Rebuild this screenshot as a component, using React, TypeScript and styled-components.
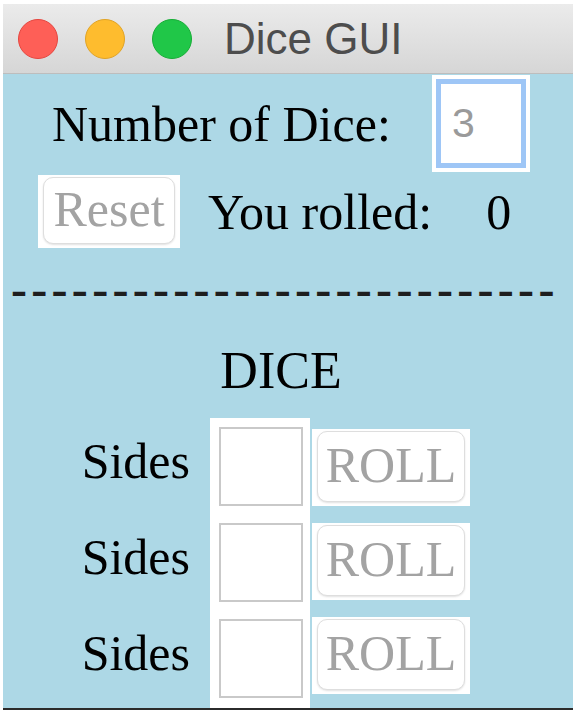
import styled, { createGlobalStyle } from "styled-components";

const GlobalStyle = createGlobalStyle`
  html, body {
    margin: 0;
    padding: 0;
    background: #ffffff;
  }
`;

const Window = styled.div`
  width: 570px;
  height: 704px;
  margin: 4px 0 0 3px;
  display: flex;
  flex-direction: column;
  border-bottom: 2px solid #2b2b2b;
  overflow: hidden;
`;

const TitleBar = styled.div`
  height: 69px;
  flex: none;
  display: flex;
  align-items: center;
  gap: 27px;
  padding-left: 15px;
  background: linear-gradient(#ebebeb, #d6d6d6);
  border-bottom: 1px solid #bdbdbd;
`;

const Light = styled.span<{ $fill: string; $edge: string }>`
  width: 40px;
  height: 40px;
  border-radius: 50%;
  box-sizing: border-box;
  background: ${({ $fill }) => $fill};
  border: 1px solid ${({ $edge }) => $edge};
`;

const Title = styled.span`
  margin-left: 5px;
  font-family: "Liberation Sans", Arial, sans-serif;
  font-size: 44px;
  color: #4d4d4d;
`;

const Content = styled.div`
  flex: 1;
  display: flex;
  flex-direction: column;
  background: #add8e6;
  font-family: "Liberation Serif", "Times New Roman", serif;
  font-size: 50px;
  color: #000;
`;

const Row = styled.div<{ $height: number; $top?: number }>`
  height: ${({ $height }) => $height}px;
  margin-top: ${({ $top }) => $top ?? 0}px;
  display: flex;
  align-items: center;
`;

const Label = styled.span<{ $left?: number; $top?: number }>`
  margin-left: ${({ $left }) => $left ?? 0}px;
  margin-top: ${({ $top }) => $top ?? 0}px;
  line-height: 50px;
  white-space: nowrap;
`;

const NumberBox = styled.div`
  width: 98px;
  height: 97px;
  box-sizing: border-box;
  padding: 4px;
  margin-left: auto;
  margin-right: 43px;
  align-self: flex-end;
  background: #fff;
`;

const NumberInput = styled.div`
  height: 100%;
  box-sizing: border-box;
  border: 5px solid #9ec6f6;
  padding-left: 11px;
  display: flex;
  align-items: center;
  background: #fff;
  font-family: "Liberation Sans", Arial, sans-serif;
  font-size: 41px;
  color: #9a9a9a;
`;

const ButtonFrame = styled.div<{ $width: number; $height: number; $left?: number }>`
  width: ${({ $width }) => $width}px;
  height: ${({ $height }) => $height}px;
  margin-left: ${({ $left }) => $left ?? 0}px;
  box-sizing: border-box;
  padding: 2px 5px 4px 5px;
  background: #fff;
  flex: none;
`;

const PushButton = styled.button`
  width: 100%;
  height: 100%;
  margin: 0;
  padding: 0 0 4px 0;
  border: 1px solid #dedede;
  border-radius: 10px;
  background: #fff;
  box-shadow: 0 1px 2px rgba(0, 0, 0, 0.12);
  font-family: "Liberation Serif", "Times New Roman", serif;
  font-size: 50px;
  color: #a3a3a3;
  text-align: center;
  line-height: 1;
`;

const Divider = styled.div`
  margin: 16px 0 0 8px;
  height: 50px;
  line-height: 50px;
  font-size: 48px;
  font-weight: bold;
  letter-spacing: 4.3px;
  white-space: nowrap;
  color: #1e1e1e;
`;

const Heading = styled.div`
  margin-top: 32px;
  padding-right: 14px;
  height: 50px;
  line-height: 50px;
  font-size: 52px;
  text-align: center;
`;

const DiceGrid = styled.div`
  flex: 1;
  margin-top: 22px;
  display: flex;
  align-items: stretch;
`;

const Column = styled.div<{ $width: number; $white?: boolean; $padLeft?: number; $padTop: number }>`
  width: ${({ $width }) => $width}px;
  box-sizing: border-box;
  padding-top: ${({ $padTop }) => $padTop}px;
  padding-left: ${({ $padLeft }) => $padLeft ?? 0}px;
  display: flex;
  flex-direction: column;
  gap: 17px;
  background: ${({ $white }) => ($white ? "#fff" : "transparent")};
`;

const SideLabel = styled.div`
  height: 79px;
  line-height: 68px;
  text-align: right;
  padding-right: 20px;
`;

const SidesField = styled.div`
  width: 84px;
  height: 79px;
  box-sizing: border-box;
  border: 2px solid #c9c9c9;
  background: #fff;
`;

const dice = [1, 2, 3];

export default function App() {
  return (
    <>
      <GlobalStyle />
      <Window>
        <TitleBar>
          <Light $fill="#fe5f57" $edge="#e5463f" />
          <Light $fill="#febc2e" $edge="#e0a326" />
          <Light $fill="#20c748" $edge="#17ad36" />
          <Title>Dice GUI</Title>
        </TitleBar>
        <Content>
          <Row $height={98}>
            <Label $left={49} $top={2}>
              Number of Dice:
            </Label>
            <NumberBox>
              <NumberInput>3</NumberInput>
            </NumberBox>
          </Row>
          <Row $height={73} $top={3}>
            <ButtonFrame $width={142} $height={73} $left={35}>
              <PushButton>Reset</PushButton>
            </ButtonFrame>
            <Label $left={28}>You rolled:</Label>
            <Label $left={54}>0</Label>
          </Row>
          <Divider>{"-".repeat(27)}</Divider>
          <Heading>DICE</Heading>
          <DiceGrid>
            <Column $width={207} $padTop={9}>
              {dice.map((d) => (
                <SideLabel key={d}>Sides</SideLabel>
              ))}
            </Column>
            <Column $width={100} $white $padLeft={9} $padTop={9}>
              {dice.map((d) => (
                <SidesField key={d} />
              ))}
            </Column>
            <Column $width={170} $padLeft={2} $padTop={11}>
              {dice.map((d) => (
                <ButtonFrame key={d} $width={158} $height={77}>
                  <PushButton>ROLL</PushButton>
                </ButtonFrame>
              ))}
            </Column>
          </DiceGrid>
        </Content>
      </Window>
    </>
  );
}
